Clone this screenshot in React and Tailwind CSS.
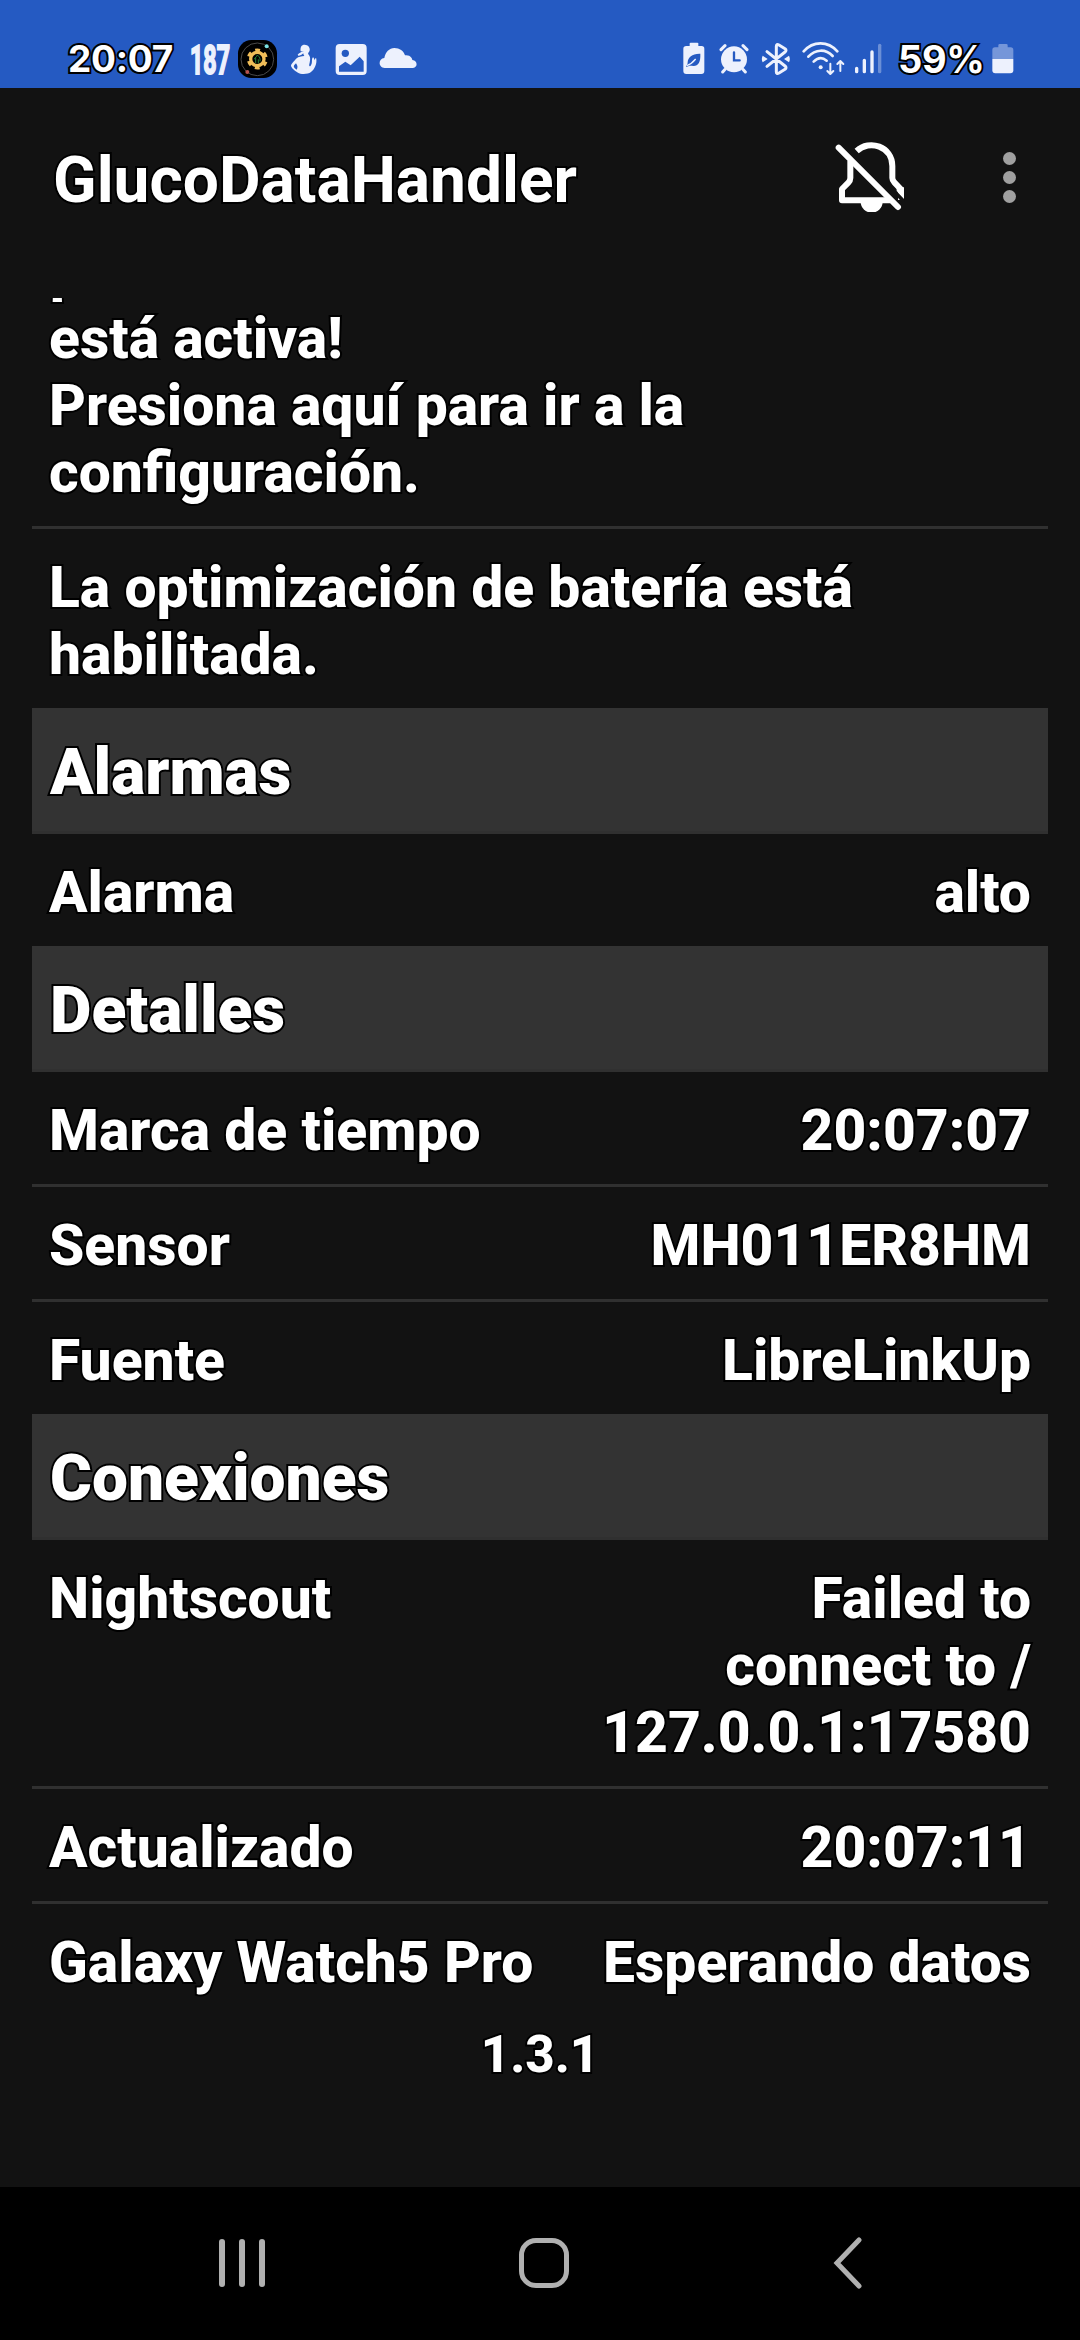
import React from 'react';

const outline = '[-webkit-text-stroke:4px_#000] [paint-order:stroke_fill]';

const details = [
  { label: 'Marca de tiempo', value: '20:07:07' },
  { label: 'Sensor', value: 'MH011ER8HM' },
  { label: 'Fuente', value: 'LibreLinkUp' },
];

const connections = [
  { label: 'Nightscout', lines: ['Failed to', 'connect to /', '127.0.0.1:17580'] },
  { label: 'Actualizado', value: '20:07:11' },
  { label: 'Galaxy Watch5 Pro', value: 'Esperando datos' },
];

function StatusBar() {
  return (
    <div className="h-[88px] bg-[#255ac2] flex items-start pt-[38px] text-[#edf1fd]">
      <span className={`ml-[68px] mt-px w-[105px] h-10 font-[Inter,sans-serif] font-bold text-[37px] leading-[40px] tracking-[-0.3px] text-white whitespace-nowrap ${outline}`}>
        20:07
      </span>
      {/* Glucose value notification */}
      <svg className="ml-[15px] -mt-2 w-11 h-14 overflow-visible" viewBox="-2 -8 44 56">
        <text x="0" y="36" textLength="40" lengthAdjust="spacingAndGlyphs" fill="currentColor" stroke="currentColor" strokeWidth="2" className="font-[Roboto,sans-serif] font-bold text-[40px]">187</text>
      </svg>
      <svg className="ml-[5px] w-[42px] h-10" viewBox="561 54 126 120">
        <rect x="564" y="60" width="117" height="114" rx="40" fill="#000" />
        <circle cx="622" cy="118" r="49" fill="none" stroke="#4a4a4a" strokeWidth="3" />
        <circle cx="622" cy="117" r="20" fill="none" stroke="#f0bd58" strokeWidth="10" />
        <circle cx="622" cy="117" r="27" fill="none" stroke="#f0bd58" strokeWidth="9" strokeDasharray="14.1 14.17" strokeDashoffset="7" transform="rotate(30 622 117)" />
        <path d="M613 118c0-6 8-6 9-13 8 7 9 12 8 19M617 112v17M625 118v12" fill="none" stroke="#28803a" strokeWidth="3" />
        <circle cx="650" cy="79" r="6" fill="#7be3e6" />
        <circle cx="592" cy="156" r="6" fill="#b5524f" />
      </svg>
      <svg className="ml-[10px] w-[30px] h-10" viewBox="717 54 90 120">
        <path d="M752 94c-2-12 2-20 12-20s17 9 15 17c-1 7-6 7-4 12 7 7 6 17 4 25-3 9-1 13 3 9 7-8 1-19 7-25 3 1 4 5 4 9 4-7 5-9 6-4 2 14-5 31-17 40-7 6-31 7-38 1-9-4-19-14-21-20 0-6 9-14 17-23 5-5 14-6 23-7-3-4-3-6-3-8-4 2-7 8-15 7l-2-3c5-4 8-8 19-10z" fill="currentColor" />
        <path d="M738 130c-9 8-9 12 2 19 4-7 3-12-2-19z" fill="#255ac2" />
      </svg>
      <svg className="ml-[16px] w-8 h-10" viewBox="856 54 96 120">
        <rect x="861" y="75" width="87" height="87" rx="9" fill="none" stroke="currentColor" strokeWidth="6" />
        <rect x="861" y="75" width="87" height="87" rx="9" fill="currentColor" />
        <circle cx="887" cy="100" r="11" fill="#255ac2" />
        <path d="M868 155v-16l19-14 16 11 27-26 12 14v31z" fill="#255ac2" />
      </svg>
      <svg className="ml-3 w-[38px] h-10" viewBox="988 54 114 120">
        <path d="M1005 144c-20-1-20-28-1-30 3-17 15-30 30-30 16 0 28 9 32 22 17-2 22 10 22 14 18 3 16 24 0 24z" fill="currentColor" />
      </svg>

      <div className="flex-1" />

      <svg className="w-[22px] h-10" viewBox="68 54 66 120">
        <path d="M88 70q0-2 3-2h20q3 0 3 2v8h10q8 0 8 8v67q0 9-9 9H78q-9 0-9-9V86q0-8 9-8h10z" fill="currentColor" />
        <path d="M120 101c1 25-6 36-20 37-7 0-12-1-14 0l-9 3c2-7 5-7 5-14 1-16 14-27 38-26z" fill="#255ac2" />
        <path d="M79 137c12-4 19-10 27-20" fill="none" stroke="currentColor" strokeWidth="4" />
      </svg>
      <svg className="ml-[14px] w-[30px] h-10" viewBox="176 54 90 120">
        <circle cx="221" cy="118" r="39" fill="currentColor" />
        <path d="M182 89l12-12M260 89l-12-12M193 149l-6 7M249 149l6 7" stroke="currentColor" strokeWidth="9" strokeLinecap="round" />
        <path d="M221 97v24h17" fill="none" stroke="#255ac2" strokeWidth="7" strokeLinecap="round" />
      </svg>
      <svg className="ml-3 w-[30px] h-10" viewBox="302 54 90 120">
        <path d="M320 95l54 43q6 5 0 10l-18 11q-8 4-8-4V79q0-8 8-4l18 11q6 5 0 10l-54 43" fill="none" stroke="currentColor" strokeWidth="9" strokeLinecap="round" strokeLinejoin="round" />
        <path d="M307 107l15 10-15 10q-5-10 0-20zM386 107l-15 10 15 10q5-10 0-20z" fill="currentColor" />
      </svg>
      <svg className="ml-[11px] w-[44px] h-10" viewBox="424 54 132 120">
        <g fill="none" stroke="currentColor" strokeWidth="8" strokeLinecap="round">
          <path d="M429 94c28-32 73-32 101 0" />
          <path d="M443 110c21-23 52-24 73-2" />
          <path d="M459 125c13-13 27-13 39-3" />
          <path d="M509 131v30M500 153l9 9 9-9M539 153v-29M530 132l9-9 9 9" strokeWidth="6" strokeLinejoin="round" />
        </g>
        <circle cx="480" cy="142" r="6" fill="currentColor" />
      </svg>
      <svg className="ml-2 w-7 h-10" viewBox="580 54 84 120">
        <g stroke="currentColor" strokeWidth="10" strokeLinecap="round">
          <path d="M588 145v10M611 121v34M634 96v59" />
          <path d="M657 76v79" opacity="0.35" />
        </g>
      </svg>
      <span className={`ml-[16px] mt-px w-[88px] h-10 font-[Inter,sans-serif] font-bold text-[38px] leading-[40px] tracking-[-0.3px] text-white whitespace-nowrap ${outline}`}>
        59%
      </span>
      <svg className="ml-[6px] mr-[66px] w-[22px] h-10" viewBox="995 54 66 120">
        <path d="M1014 76q0-4 4-4h20q4 0 4 4v6h9q8 0 8 8v27h-63V90q0-8 8-8h10z" fill="currentColor" opacity="0.4" />
        <path d="M996 117h63v34q0 9-9 9h-45q-9 0-9-9z" fill="currentColor" />
      </svg>
    </div>
  );
}

function Toolbar() {
  return (
    <div className="h-[184px] mb-[26px] flex items-center pl-[53px]">
      <h1 className={`text-[64px] font-[750] leading-[75px] ${outline}`}>GlucoDataHandler</h1>
      <div className="flex-1" />
      <svg className="mb-2 w-[72px] h-[72px]" viewBox="105 60 216 216">
        <g fill="none" stroke="#fff" strokeWidth="18">
          <path d="M170 93c38-36 107-14 107 45v36c0 6 2 9 6 13l20 21v32" />
          <path d="M151 122v52c0 7-2 10-6 14l-19 19v34h144" strokeLinejoin="round" />
          <path d="M116 83l178 178" strokeLinecap="round" />
        </g>
        <path d="M182 245h66a33 33 0 0 1-66 0z" fill="#fff" />
        <path d="M289 212l24 26v8h-8l-16-18z" fill="#121212" />
        <path d="M290 205l22-3v33l-22-22z" fill="#fff" />
      </svg>
      <div className="ml-[96px] mr-[64px] mb-[5px] flex flex-col gap-[6px]">
        <span className="w-[13px] h-[13px] rounded-full bg-[#a0a0a0]" />
        <span className="w-[13px] h-[13px] rounded-full bg-[#a0a0a0]" />
        <span className="w-[13px] h-[13px] rounded-full bg-[#a0a0a0]" />
      </div>
    </div>
  );
}

function SectionHeader({ children }) {
  return (
    <h2 className={`h-[126px] px-[18px] pt-[5px] flex items-center bg-[#333333] border-b-[3px] border-[#303030] text-[64px] font-black ${outline}`}>
      {children}
    </h2>
  );
}

function Row({ label, value, lines }) {
  return (
    <div className="px-[17px] pt-[25px] pb-5 flex justify-between">
      <span className={outline}>{label}</span>
      <span className={`text-right ${outline}`}>
        {lines ? lines.map((line) => <span key={line} className="block">{line}</span>) : value}
      </span>
    </div>
  );
}

function Rows({ items }) {
  return (
    <div className="divide-y-[3px] divide-[#303030]">
      {items.map((item) => (
        <Row key={item.label} {...item} />
      ))}
    </div>
  );
}

function NavBar() {
  return (
    <div className="h-[153px] bg-black flex items-center pl-[219px] pb-px text-[#b0b0b0]">
      <div className="flex gap-[14.5px]">
        <span className="w-[5.5px] h-12 rounded-full bg-current" />
        <span className="w-[5.5px] h-12 rounded-full bg-current" />
        <span className="w-[5.5px] h-12 rounded-full bg-current" />
      </div>
      <span className="ml-[254px] w-[50px] h-[50px] rounded-[17px] border-[5px] border-current" />
      <svg className="ml-[264px] w-[30px] h-[52px]" viewBox="0 0 30 52" fill="none" stroke="currentColor" strokeWidth="5" strokeLinecap="round">
        <path d="M26 3L4 26l22 23" />
      </svg>
    </div>
  );
}

export default function App() {
  return (
    <div className="w-[1080px] h-[2340px] flex flex-col bg-[#121212] text-white font-[Roboto,sans-serif] overflow-hidden">
      <StatusBar />
      <Toolbar />

      {/* Scrolled list, the first line is cut off by the toolbar */}
      <div className="flex-1 px-8 overflow-hidden text-[57px] leading-[67px] font-[760]">
        <div className="-mt-[60px] px-[17px] pb-[20px] border-b-[3px] border-[#303030]">
          <p className={outline}>¡</p>
          <p className={outline}>está activa!</p>
          <p className={outline}>Presiona aquí para ir a la</p>
          <p className={outline}>configuración.</p>
        </div>
        <div className="px-[17px] pt-[25px] pb-5">
          <p className={outline}>La optimización de batería está</p>
          <p className={outline}>habilitada.</p>
        </div>

        <SectionHeader>Alarmas</SectionHeader>
        <Row label="Alarma" value="alto" />

        <SectionHeader>Detalles</SectionHeader>
        <Rows items={details} />

        <SectionHeader>Conexiones</SectionHeader>
        <Rows items={connections} />

        <p className={`text-center text-[51px] leading-[60px] mt-[9px] ${outline}`}>1.3.1</p>
      </div>

      <NavBar />
    </div>
  );
}
